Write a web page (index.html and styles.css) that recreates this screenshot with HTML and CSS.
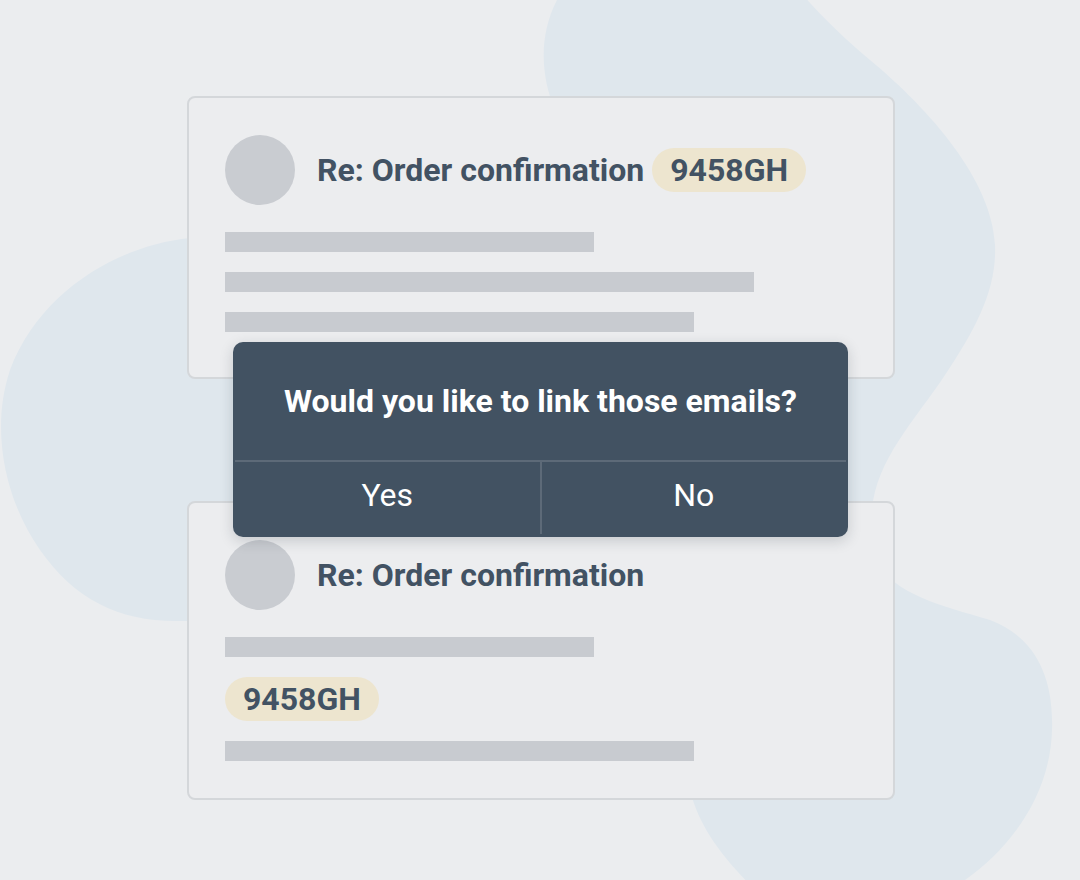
FILE: index.html
```html
<!DOCTYPE html>
<html>
<head>
  <title>Link emails</title>
  <link rel="stylesheet" href="styles.css">
</head>
<body>

  <div class="scene">
    <!-- background shapes -->
    <svg class="blobs" width="1080" height="880" viewBox="0 0 1080 880">
      <path d="M 570 -20 C 538 20, 538 70, 555 110 L 650 500 L 690 790 C 700 830, 725 860, 760 895 L 940 895 C 990 870, 1050 810, 1052 730 C 1054 670, 1030 635, 990 620 C 940 605, 895 595, 875 560 C 868 540, 868 525, 872 510 C 876 460, 915 420, 945 375 C 975 330, 997 290, 995 245 C 992 180, 930 110, 870 60 C 840 35, 815 10, 790 -20 Z"/>
      <path d="M 190 238 C 120 245, 40 290, 10 370 C -10 430, 5 500, 40 550 C 75 600, 120 622, 180 621 L 300 621 L 300 238 Z"/>
    </svg>

    <div class="cards">
      <div class="card card-first">
        <div class="card-head">
          <span class="avatar"></span>
          <h3 class="subject">Re: Order confirmation</h3>
          <span class="tag">9458GH</span>
        </div>
        <div class="card-body">
          <span class="line line-short"></span>
          <span class="line line-long"></span>
          <span class="line line-mid"></span>
        </div>
      </div>

      <div class="card card-second">
        <div class="card-head">
          <span class="avatar"></span>
          <h3 class="subject">Re: Order confirmation</h3>
        </div>
        <div class="card-body">
          <span class="line line-short"></span>
          <span class="tag">9458GH</span>
          <span class="line line-mid"></span>
        </div>
      </div>
    </div>

    <div class="dialog">
      <p class="dialog-title">Would you like to link those emails?</p>
      <div class="dialog-actions">
        <button class="dialog-btn">Yes</button>
        <button class="dialog-btn">No</button>
      </div>
    </div>
  </div>

</body>
</html>
```

FILE: styles.css
```css
body {
  margin: 0;
  background: #ebedef;
  font-family: Roboto, "Noto Sans", sans-serif;
}

.scene {
  position: relative;
  width: 1080px;
  height: 880px;
  overflow: hidden;
}

.blobs {
  position: absolute;
  top: 0;
  left: 0;
}

.blobs path {
  fill: #dfe7ed;
}

.cards {
  position: relative;
  display: flex;
  flex-direction: column;
  gap: 122px;
  width: 708px;
  padding: 96px 0 0 187px;
}

.card {
  background: #ecedef;
  border: 2px solid #d4d7da;
  border-radius: 8px;
  padding: 37px 36px 45px;
}

.card-second {
  padding-bottom: 37px;
}

.card-head {
  display: flex;
  align-items: center;
  height: 70px;
}

.avatar {
  width: 70px;
  height: 70px;
  border-radius: 50%;
  background: #c9ccd1;
  flex-shrink: 0;
}

.subject {
  margin: 0 0 0 22px;
  font-size: 32px;
  font-weight: 700;
  color: #425263;
}

.tag {
  display: inline-flex;
  align-items: center;
  height: 44px;
  padding: 0 18px;
  border-radius: 22px;
  background: #ede5cf;
  color: #425263;
  font-size: 32px;
  font-weight: 700;
  margin-left: 8px;
}

.card-body {
  display: flex;
  flex-direction: column;
  align-items: flex-start;
  gap: 20px;
  margin-top: 27px;
}

.card-body .tag {
  margin-left: 0;
}

.line {
  display: block;
  height: 20px;
  background: #c8cbd0;
}

.line-short {
  width: 369px;
}

.line-long {
  width: 529px;
}

.line-mid {
  width: 469px;
}

.dialog {
  position: absolute;
  left: 233px;
  top: 342px;
  width: 615px;
  height: 195px;
  box-sizing: border-box;
  padding: 0 2px 3px;
  display: flex;
  flex-direction: column;
  background: #425262;
  border-radius: 10px;
  box-shadow: 0 4px 14px rgba(30, 40, 50, 0.18);
}

.dialog-title {
  margin: 0;
  height: 118px;
  display: flex;
  align-items: center;
  justify-content: center;
  color: #fff;
  font-size: 32px;
  font-weight: 700;
}

.dialog-actions {
  flex: 1;
  display: flex;
  border-top: 2px solid #5d6a78;
}

.dialog-btn {
  flex: 1;
  background: none;
  border: 0;
  color: #fff;
  font-family: Roboto, "Noto Sans", sans-serif;
  font-size: 32px;
  font-weight: 400;
  padding: 0 0 6px;
}

.dialog-btn + .dialog-btn {
  border-left: 2px solid #5d6a78;
}
```
